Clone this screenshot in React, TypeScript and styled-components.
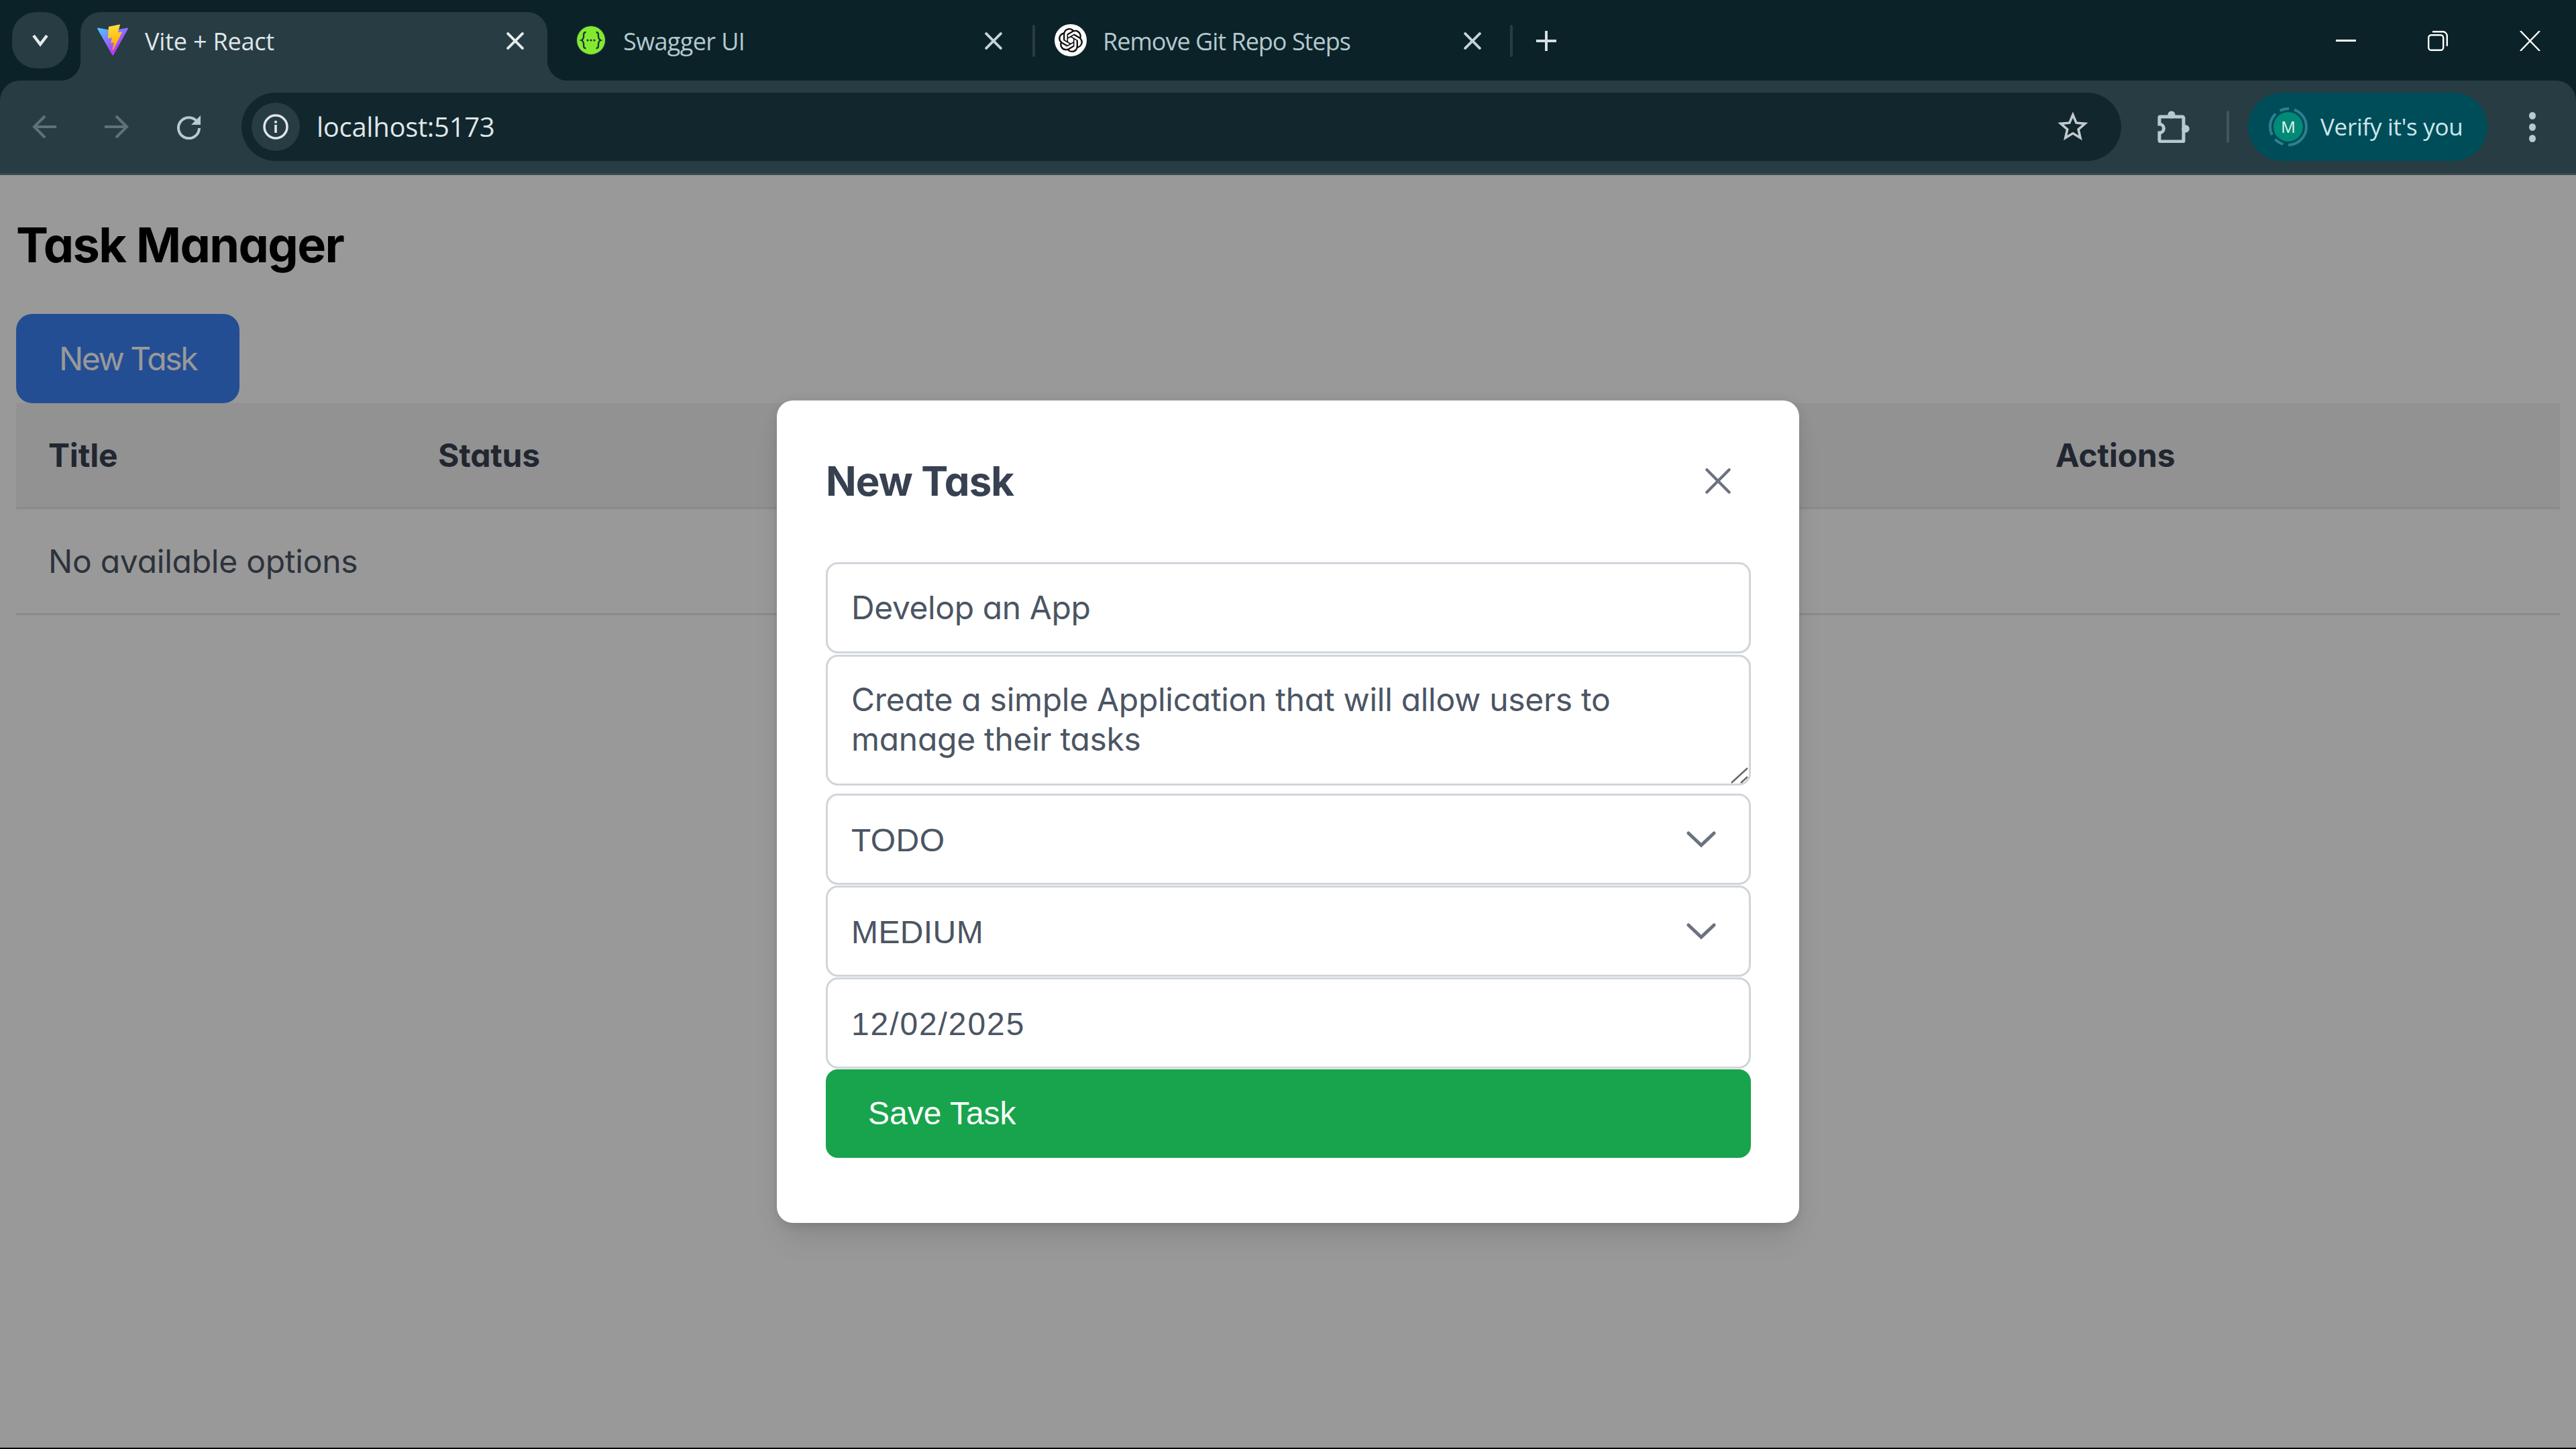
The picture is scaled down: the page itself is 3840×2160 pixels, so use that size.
import React from 'react';
import styled, { createGlobalStyle } from 'styled-components';
import { SiOpenai } from 'react-icons/si';

const STRIP = '#0b2228';
const TOOLBAR = '#283c43';
const UI_FONT = '"Open Sans", "Noto Sans", sans-serif';
const PAGE_FONT = 'Inter, "Liberation Sans", sans-serif';
const NATIVE_FONT = '"Liberation Sans", Arial, sans-serif';

const GlobalStyle = createGlobalStyle`
  html, body {
    margin: 0;
    width: 3840px;
    height: 2160px;
    overflow: hidden;
    background: #000;
  }
  * { box-sizing: border-box; }
`;

const Shell = styled.div`
  width: 3840px;
  height: 2158px;
  display: flex;
  flex-direction: column;
  background: ${STRIP};
`;

const TabStrip = styled.div`
  height: 120px;
  flex: none;
  display: flex;
  align-items: flex-start;
  padding: 18px 0 0 18px;
`;

const TabMenu = styled.div`
  width: 84px;
  height: 84px;
  margin-right: 18px;
  border-radius: 36px;
  background: ${TOOLBAR};
  display: flex;
  align-items: center;
  justify-content: center;
`;

const Tab = styled.div<{ $active?: boolean; $width: number; $left: number; $right: number }>`
  position: relative;
  width: ${(p) => p.$width}px;
  height: 102px;
  flex: none;
  display: flex;
  align-items: flex-start;
  padding: 18px ${(p) => p.$right}px 0 ${(p) => p.$left}px;
  border-radius: 30px 30px 0 0;
  background: ${(p) => (p.$active ? TOOLBAR : 'transparent')};
  color: ${(p) => (p.$active ? '#dfe6e8' : '#b4c9ce')};

  ${(p) =>
    p.$active &&
    `
    &::before, &::after {
      content: '';
      position: absolute;
      bottom: 0;
      width: 30px;
      height: 30px;
    }
    &::before {
      left: -30px;
      background: radial-gradient(circle at 0 0, transparent 30px, ${TOOLBAR} 30.5px);
    }
    &::after {
      right: -30px;
      background: radial-gradient(circle at 100% 0, transparent 30px, ${TOOLBAR} 30.5px);
    }
  `}
`;

const Favicon = styled.div`
  width: 48px;
  height: 48px;
  flex: none;
  display: flex;
  align-items: center;
  justify-content: center;
`;

const OpenAiBadge = styled(Favicon)`
  border-radius: 50%;
  background: #fff;
  color: #111;
`;

const TabTitle = styled.span<{ $spacing?: number }>`
  flex: 1;
  margin-left: 24px;
  padding-top: 2px;
  font: 400 36px/48px ${UI_FONT};
  white-space: nowrap;
  letter-spacing: ${(p) => p.$spacing ?? -0.4}px;
`;

const TabClose = styled.div`
  width: 36px;
  height: 48px;
  flex: none;
  display: flex;
  align-items: center;
  justify-content: center;
  margin-top: 1px;
`;

const TabDivider = styled.div`
  width: 4px;
  height: 48px;
  margin-top: 19px;
  flex: none;
  border-radius: 2px;
  background: #283c43;
`;

const NewTabButton = styled.div`
  width: 48px;
  height: 48px;
  margin: 19px 0 0 26px;
  display: flex;
  align-items: center;
  justify-content: center;
`;

const WindowControls = styled.div`
  margin-left: auto;
  padding-right: 53px;
  display: flex;
  align-items: center;
  gap: 107px;
  height: 84px;
  padding-top: 2px;
`;

const Toolbar = styled.div`
  height: 138px;
  flex: none;
  display: flex;
  align-items: center;
  padding: 0 30px 0 30px;
  background: ${TOOLBAR};
  border-radius: 30px 30px 0 0;
`;

const NavButton = styled.div`
  width: 72px;
  height: 72px;
  flex: none;
  margin-right: 36px;
  display: flex;
  align-items: center;
  justify-content: center;
`;

const AddressBar = styled.div`
  width: 2802px;
  height: 102px;
  margin-left: 6px;
  flex: none;
  display: flex;
  align-items: center;
  padding: 0 45px 0 15px;
  border-radius: 51px;
  background: #12262d;
`;

const SiteInfo = styled.div`
  width: 72px;
  height: 72px;
  flex: none;
  border-radius: 50%;
  background: ${TOOLBAR};
  display: flex;
  align-items: center;
  justify-content: center;
`;

const Url = styled.span`
  flex: 1;
  margin-left: 25px;
  font: 400 40px/54px ${UI_FONT};
  color: #dfe6e8;
  letter-spacing: -0.3px;
`;

const ExtensionButton = styled.div`
  width: 48px;
  height: 48px;
  margin-left: 54px;
  flex: none;
  display: flex;
`;

const ToolbarDivider = styled.div`
  width: 4px;
  height: 48px;
  margin: 0 28px 0 55px;
  flex: none;
  border-radius: 2px;
  background: #41555b;
`;

const VerifyPill = styled.div`
  width: 357px;
  height: 102px;
  flex: none;
  display: flex;
  align-items: center;
  padding-left: 30px;
  border-radius: 51px;
  background: #004d5a;
`;

const AvatarRing = styled.div`
  position: relative;
  width: 60px;
  height: 60px;
  flex: none;
  display: flex;
  align-items: center;
  justify-content: center;
`;

const Avatar = styled.div`
  width: 44px;
  height: 44px;
  border-radius: 50%;
  background: #028a76;
  color: #e4f5f2;
  display: flex;
  align-items: center;
  justify-content: center;
  font: 400 24px/1 ${UI_FONT};
`;

const RingSvg = styled.svg`
  position: absolute;
  inset: 0;
`;

const VerifyText = styled.span`
  margin-left: 18px;
  font: 400 35px/48px ${UI_FONT};
  color: #cce8ec;
  letter-spacing: -0.3px;
  white-space: nowrap;
`;

const MenuDots = styled.div`
  margin-left: 55px;
  width: 24px;
  display: flex;
  flex-direction: column;
  align-items: center;
  gap: 6px;
`;

const Dot = styled.span`
  width: 10px;
  height: 11px;
  border-radius: 50%;
  background: #b6cbd1;
`;

const Page = styled.main`
  position: relative;
  flex: 1;
  border-top: 3px solid #3c4a4f;
  background: #fff;
  padding: 50px 24px 0;
  font-family: ${PAGE_FONT};
  font-feature-settings: 'cv11';
`;

const Heading = styled.h1`
  margin: 0 0 49px;
  font-size: 72px;
  line-height: 108px;
  font-weight: 700;
  color: #000;
  letter-spacing: -1.6px;
`;

const PrimaryButton = styled.button`
  display: block;
  width: 333px;
  height: 133px;
  border: 0;
  padding: 0;
  border-radius: 24px;
  background: #3b82f6;
  color: #fff;
  font: inherit;
  font-feature-settings: inherit;
  font-size: 48px;
  letter-spacing: -2.4px;
`;

const TableRow = styled.div<{ $head?: boolean }>`
  display: grid;
  grid-template-columns: 581px 2411px 1fr;
  align-items: center;
  height: ${(p) => (p.$head ? 158 : 158)}px;
  border-bottom: 3px solid #e5e7eb;
  background: ${(p) => (p.$head ? '#f3f4f6' : 'transparent')};
`;

const HeadCell = styled.div`
  padding: 0 48px;
  font-size: 48px;
  font-weight: 700;
  color: #374151;
  letter-spacing: -0.2px;
`;

const BodyCell = styled.div`
  padding: 0 48px;
  font-size: 48px;
  color: #4b5563;
  letter-spacing: -0.25px;
  white-space: nowrap;
`;

const Overlay = styled.div`
  position: absolute;
  inset: 0;
  display: flex;
  align-items: center;
  justify-content: center;
  background: rgba(0, 0, 0, 0.4);
`;

const Modal = styled.section`
  width: 1524px;
  padding: 72px 72px 97px 73px;
  border-radius: 24px;
  background: #fff;
  box-shadow: 0 30px 45px -9px rgba(0, 0, 0, 0.1), 0 12px 18px -12px rgba(0, 0, 0, 0.1), 0 0 18px rgba(0, 0, 0, 0.08);
`;

const ModalHeader = styled.header`
  height: 97px;
  margin-bottom: 72px;
  display: flex;
  align-items: center;
  justify-content: space-between;
  padding-right: 29px;
`;

const ModalTitle = styled.h2`
  margin: 0;
  font-size: 60px;
  font-weight: 700;
  color: #374151;
  letter-spacing: -0.9px;
`;

const Form = styled.form`
  display: flex;
  flex-direction: column;
`;

const TextInput = styled.input<{ $native?: boolean }>`
  display: block;
  width: 100%;
  height: 136px;
  padding: ${(p) => (p.$native ? '3px' : '0')} 35px 0;
  border: 3px solid #d1d5db;
  border-radius: 18px;
  background: #fff;
  color: #4b5563;
  outline: none;
  font-family: ${(p) => (p.$native ? NATIVE_FONT : PAGE_FONT)};
  font-feature-settings: 'cv11';
  font-size: 48px;
  letter-spacing: ${(p) => (p.$native ? '1.9px' : '-0.4px')};
`;

const TextAreaWrap = styled.div`
  position: relative;
  height: 195px;
  margin: 2px 0 12px;
`;

const TextArea = styled.textarea`
  display: block;
  width: 100%;
  height: 100%;
  padding: 34px 35px 0;
  resize: none;
  border: 3px solid #d1d5db;
  border-radius: 18px;
  color: #4b5563;
  outline: none;
  font-family: ${PAGE_FONT};
  font-feature-settings: 'cv11';
  font-size: 48px;
  line-height: 59px;
  letter-spacing: -0.3px;
`;

const ResizeGrip = styled.svg`
  position: absolute;
  right: 4px;
  bottom: 3px;
`;

const SelectWrap = styled.div`
  position: relative;
  margin-bottom: 1px;
`;

const Select = styled.select`
  display: block;
  width: 100%;
  height: 136px;
  padding: 3px 35px 0;
  appearance: none;
  border: 3px solid #d1d5db;
  border-radius: 18px;
  background: #fff;
  color: #4b5563;
  outline: none;
  font-family: ${NATIVE_FONT};
  font-size: 48px;
  letter-spacing: 0.4px;
`;

const Chevron = styled.svg`
  position: absolute;
  right: 52px;
  top: 55px;
  pointer-events: none;
`;

const SaveButton = styled.button`
  display: block;
  width: 100%;
  height: 132px;
  margin-top: 1px;
  padding: 0 0 0 63px;
  border: 0;
  border-radius: 18px;
  background: #18a44c;
  color: #fff;
  text-align: left;
  font-family: ${NATIVE_FONT};
  font-size: 48px;
`;

const CloseButton = styled.div`
  width: 40px;
  height: 40px;
  display: flex;
`;

const Cross = ({ size, color, width }: { size: number; color: string; width: number }) => (
  <svg width={size} height={size} viewBox="0 0 24 24" fill="none" stroke={color} strokeWidth={width} strokeLinecap="round">
    <path d="M2 2 22 22M22 2 2 22" />
  </svg>
);

const ViteIcon = () => (
  <svg width="48" height="48" viewBox="0 0 410 404">
    <defs>
      <linearGradient id="viteA" x1="6" y1="33" x2="235" y2="344" gradientUnits="userSpaceOnUse">
        <stop stopColor="#41D1FF" />
        <stop offset="1" stopColor="#BD34FE" />
      </linearGradient>
      <linearGradient id="viteB" x1="194.651" y1="8.818" x2="236.076" y2="292.989" gradientUnits="userSpaceOnUse">
        <stop stopColor="#FFEA83" />
        <stop offset="0.083" stopColor="#FFDD35" />
        <stop offset="1" stopColor="#FFA800" />
      </linearGradient>
    </defs>
    <path
      fill="url(#viteA)"
      d="M399.641 59.525 215.643 388.545c-3.799 6.793-13.559 6.833-17.415.073L10.582 59.556C6.38 52.19 12.68 43.266 21.028 44.76l184.195 32.923c1.175.21 2.378.208 3.553-.006l180.343-32.87c8.32-1.517 14.649 7.337 10.522 14.719Z"
    />
    <path
      fill="url(#viteB)"
      d="M292.965 1.574 156.801 28.255a5 5 0 0 0-4.03 4.611l-8.376 141.464c-.197 3.332 2.863 5.918 6.115 5.168l37.91-8.749c3.547-.818 6.752 2.306 6.023 5.873l-11.263 55.153c-.758 3.712 2.727 6.886 6.352 5.785l23.415-7.114c3.63-1.102 7.118 2.081 6.35 5.796l-17.899 86.633c-1.12 5.419 6.088 8.374 9.094 3.728l2.008-3.103 110.954-221.428c1.858-3.707-1.346-7.935-5.418-7.15l-39.022 7.532c-3.667.707-6.787-2.708-5.752-6.296l25.469-88.291c1.036-3.594-2.095-7.012-5.766-6.293Z"
    />
  </svg>
);

const SwaggerIcon = () => (
  <svg width="48" height="48" viewBox="0 0 48 48" fill="none">
    <circle cx="24" cy="24" r="21.5" fill="#85ea2d" stroke="#173647" strokeWidth="1.2" />
    <path
      d="M16.5 12c-3.5 0-3.5 2-3.5 6 0 3.5-1 5-3.5 6 2.5 1 3.5 2.5 3.5 6 0 4 0 6 3.5 6M31.5 12c3.5 0 3.5 2 3.5 6 0 3.5 1 5 3.5 6-2.5 1-3.5 2.5-3.5 6 0 4 0 6-3.5 6"
      stroke="#173647"
      strokeWidth="2.4"
    />
    <circle cx="19" cy="24" r="1.6" fill="#173647" />
    <circle cx="24" cy="24" r="1.6" fill="#173647" />
    <circle cx="29" cy="24" r="1.6" fill="#173647" />
  </svg>
);

const ArrowIcon = ({ flip }: { flip?: boolean }) => (
  <svg
    width="36"
    height="36"
    viewBox="0 0 36 36"
    fill="none"
    stroke="#5f7278"
    strokeWidth="4"
    style={flip ? { transform: 'scaleX(-1)' } : undefined}
  >
    <path d="M36 18H3M19 2 3 18 19 34" />
  </svg>
);

const ReloadIcon = () => (
  <svg width="38" height="38" viewBox="0 0 38 38" fill="none">
    <path d="M31 11.5A15.5 15.5 0 1 0 34 21" stroke="#b6cbd1" strokeWidth="4" />
    <path d="M36 2v14H22z" fill="#b6cbd1" />
  </svg>
);

const InfoIcon = () => (
  <svg width="38" height="38" viewBox="0 0 38 38" fill="none">
    <circle cx="19" cy="19" r="17" stroke="#e0e6e8" strokeWidth="3.5" />
    <rect x="17.2" y="16" width="3.6" height="12" fill="#e0e6e8" />
    <rect x="17.2" y="10" width="3.6" height="3.6" fill="#e0e6e8" />
  </svg>
);

const PuzzleIcon = () => (
  <svg width="48" height="48" viewBox="0 0 48 48" fill="none">
    <path
      d="M4 9h33a2 2 0 0 1 2 2v34a1 1 0 0 1-1 1H5a2 2 0 0 1-2-2V33a6.5 6.5 0 0 0 0-13V10a1 1 0 0 1 1-1Z"
      stroke="#b6cbd1"
      strokeWidth="5"
    />
    <circle cx="21" cy="6" r="5.5" fill="#b6cbd1" />
    <circle cx="42" cy="27" r="5.8" fill="#b6cbd1" />
  </svg>
);

const RestoreIcon = () => (
  <svg width="30" height="30" viewBox="0 0 30 30" fill="none" stroke="#fff" strokeWidth="2.4">
    <rect x="1.2" y="6.2" width="22" height="22.6" rx="4" />
    <path d="M7 1.2h15a6.5 6.5 0 0 1 6.8 6.5v15" />
  </svg>
);

const ChevronIcon = () => (
  <Chevron width="44" height="27" viewBox="0 0 44 27" fill="none" stroke="#6b7280" strokeWidth="5" strokeLinecap="round">
    <path d="M3 4 22 22 41 4" />
  </Chevron>
);

export default function App() {
  return (
    <Shell>
      <GlobalStyle />
      <TabStrip>
        <TabMenu>
          <svg width="24" height="20" viewBox="0 0 24 20" fill="none" stroke="#e4eaec" strokeWidth="4.5">
            <path d="M2 3 12 16 22 3" />
          </svg>
        </TabMenu>
        <Tab $active $width={696} $left={24} $right={30}>
          <Favicon>
            <ViteIcon />
          </Favicon>
          <TabTitle $spacing={-0.2}>Vite + React</TabTitle>
          <TabClose>
            <Cross size={26} color="#e8edef" width={3.6} />
          </TabClose>
        </Tab>
        <Tab $width={723} $left={41} $right={40}>
          <Favicon>
            <SwaggerIcon />
          </Favicon>
          <TabTitle $spacing={-0.6}>Swagger UI</TabTitle>
          <TabClose>
            <Cross size={26} color="#c4d4d8" width={3.6} />
          </TabClose>
        </Tab>
        <TabDivider />
        <Tab $width={708} $left={29} $right={38}>
          <OpenAiBadge>
            <SiOpenai size={36} />
          </OpenAiBadge>
          <TabTitle $spacing={-1}>Remove Git Repo Steps</TabTitle>
          <TabClose>
            <Cross size={26} color="#c4d4d8" width={3.6} />
          </TabClose>
        </Tab>
        <TabDivider />
        <NewTabButton>
          <svg width="30" height="30" viewBox="0 0 30 30" stroke="#d5dfe2" strokeWidth="4">
            <path d="M15 0v30M0 15h30" />
          </svg>
        </NewTabButton>
        <WindowControls>
          <svg width="30" height="4" viewBox="0 0 30 4">
            <rect width="30" height="3" fill="#fff" />
          </svg>
          <RestoreIcon />
          <svg width="31" height="30" viewBox="0 0 31 30" stroke="#fff" strokeWidth="2.4">
            <path d="M1 0 30 30M30 0 1 30" />
          </svg>
        </WindowControls>
      </TabStrip>
      <Toolbar>
        <NavButton>
          <ArrowIcon />
        </NavButton>
        <NavButton>
          <ArrowIcon flip />
        </NavButton>
        <NavButton>
          <ReloadIcon />
        </NavButton>
        <AddressBar>
          <SiteInfo>
            <InfoIcon />
          </SiteInfo>
          <Url>localhost:5173</Url>
          <svg width="54" height="54" viewBox="0 0 24 24" fill="#c0cbce">
            <path d="M22 9.24l-7.19-.62L12 2 9.19 8.63 2 9.24l5.46 4.73L5.82 21 12 17.27 18.18 21l-1.63-7.03L22 9.24zM12 15.4l-3.76 2.27 1-4.28-3.32-2.88 4.38-.38L12 6.1l1.71 4.04 4.38.38-3.32 2.88 1 4.28L12 15.4z" />
          </svg>
        </AddressBar>
        <ExtensionButton>
          <PuzzleIcon />
        </ExtensionButton>
        <ToolbarDivider />
        <VerifyPill>
          <AvatarRing>
            <RingSvg width="60" height="60" viewBox="0 0 60 60" fill="none" stroke="#2e7f92" strokeWidth="4">
              <circle cx="30" cy="30" r="27" strokeDasharray="62 8 14 8 34 8 14 8" strokeDashoffset="20" />
            </RingSvg>
            <Avatar>M</Avatar>
          </AvatarRing>
          <VerifyText>Verify it's you</VerifyText>
        </VerifyPill>
        <MenuDots>
          <Dot />
          <Dot />
          <Dot />
        </MenuDots>
      </Toolbar>
      <Page>
        <Heading>Task Manager</Heading>
        <PrimaryButton>New Task</PrimaryButton>
        <TableRow $head>
          <HeadCell>Title</HeadCell>
          <HeadCell>Status</HeadCell>
          <HeadCell>Actions</HeadCell>
        </TableRow>
        <TableRow>
          <BodyCell>No available options</BodyCell>
        </TableRow>
        <Overlay>
          <Modal>
            <ModalHeader>
              <ModalTitle>New Task</ModalTitle>
              <CloseButton>
                <Cross size={40} color="#6b7280" width={2.6} />
              </CloseButton>
            </ModalHeader>
            <Form>
              <TextInput readOnly value="Develop an App" />
              <TextAreaWrap>
                <TextArea readOnly value="Create a simple Application that will allow users to manage their tasks" />
                <ResizeGrip width="26" height="24" viewBox="0 0 26 24" stroke="#666" strokeWidth="2.4">
                  <path d="M1 23 25 1M15 23 25 14" />
                </ResizeGrip>
              </TextAreaWrap>
              <SelectWrap>
                <Select defaultValue="TODO">
                  <option>TODO</option>
                  <option>IN_PROGRESS</option>
                  <option>DONE</option>
                </Select>
                <ChevronIcon />
              </SelectWrap>
              <SelectWrap>
                <Select defaultValue="MEDIUM">
                  <option>LOW</option>
                  <option>MEDIUM</option>
                  <option>HIGH</option>
                </Select>
                <ChevronIcon />
              </SelectWrap>
              <TextInput $native readOnly value="12/02/2025" />
              <SaveButton type="button">Save Task</SaveButton>
            </Form>
          </Modal>
        </Overlay>
      </Page>
    </Shell>
  );
}
